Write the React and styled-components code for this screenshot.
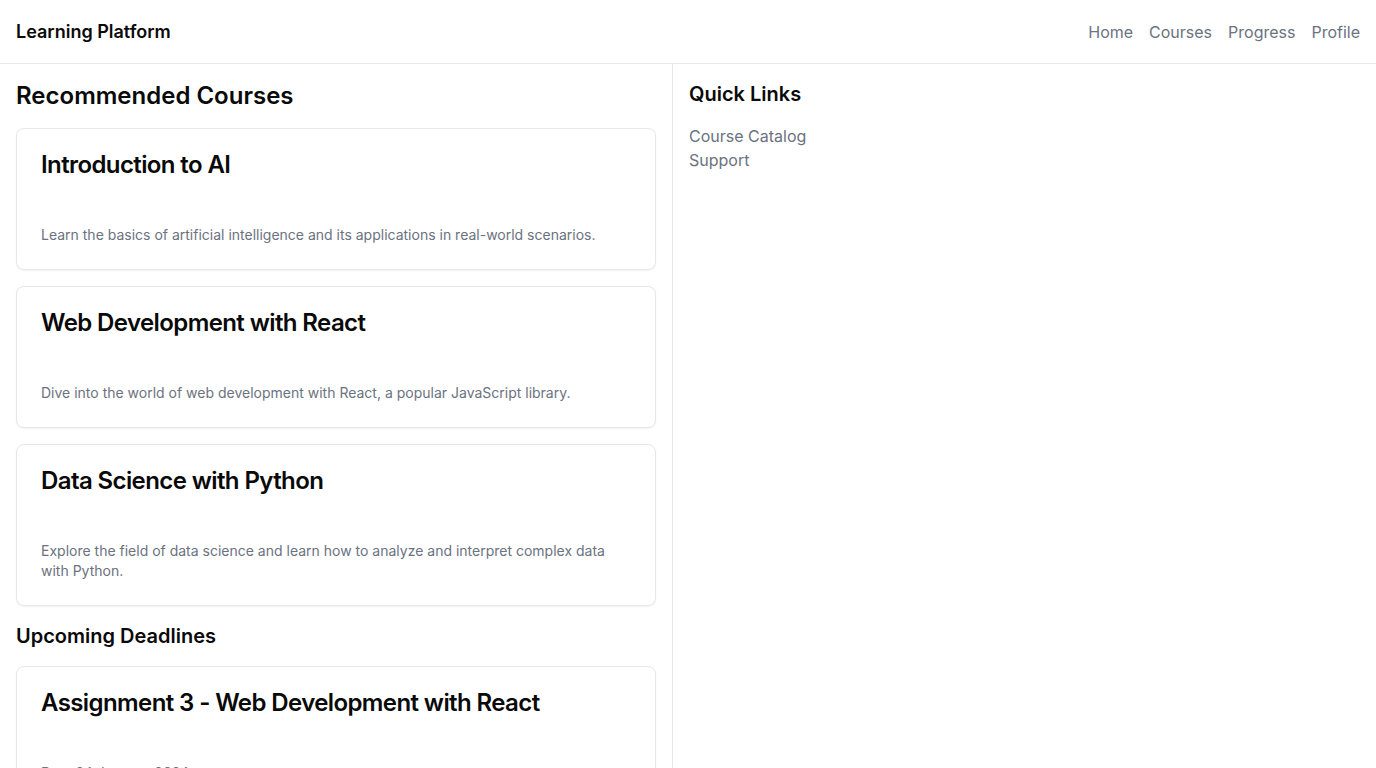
import React from 'react';
import styled, { createGlobalStyle } from 'styled-components';

const GlobalStyle = createGlobalStyle`
  * { box-sizing: border-box; }
  html, body { margin: 0; padding: 0; background: #ffffff; }
  body {
    font-family: Inter, "Noto Sans", sans-serif;
    color: #0a0a0a;
    -webkit-font-smoothing: antialiased;
  }
  h1, h2, h3, p, ul { margin: 0; padding: 0; }
`;

const courses = [
  {
    title: 'Introduction to AI',
    text: 'Learn the basics of artificial intelligence and its applications in real-world scenarios.',
  },
  {
    title: 'Web Development with React',
    text: 'Dive into the world of web development with React, a popular JavaScript library.',
  },
  {
    title: 'Data Science with Python',
    text: 'Explore the field of data science and learn how to analyze and interpret complex data with Python.',
  },
];

const deadlines = [
  { title: 'Assignment 3 - Web Development with React', text: 'Due: 24 January 2024' },
];

function Card({ title, text }) {
  return (
    <CardBox>
      <CardHeader>
        <CardTitle>{title}</CardTitle>
      </CardHeader>
      <CardContent>
        <CardText>{text}</CardText>
      </CardContent>
    </CardBox>
  );
}

function App() {
  return (
    <Page>
      <GlobalStyle />
      <Header>
        <Brand>Learning Platform</Brand>
        <Nav>
          <NavLink href="#">Home</NavLink>
          <NavLink href="#">Courses</NavLink>
          <NavLink href="#">Progress</NavLink>
          <NavLink href="#">Profile</NavLink>
        </Nav>
      </Header>
      <Main>
        <LeftColumn>
          <PageTitle>Recommended Courses</PageTitle>
          {courses.map((c) => (
            <Card key={c.title} title={c.title} text={c.text} />
          ))}
          <SectionTitle>Upcoming Deadlines</SectionTitle>
          {deadlines.map((d) => (
            <Card key={d.title} title={d.title} text={d.text} />
          ))}
        </LeftColumn>
        <RightColumn>
          <SectionTitle>Quick Links</SectionTitle>
          <LinkList>
            <li><QuickLink href="#">Course Catalog</QuickLink></li>
            <li><QuickLink href="#">Support</QuickLink></li>
          </LinkList>
        </RightColumn>
      </Main>
    </Page>
  );
}

const Page = styled.div`
  min-height: 100vh;
  display: flex;
  flex-direction: column;
`;

const Header = styled.header`
  height: 64px;
  padding: 0 16px;
  display: flex;
  align-items: center;
  justify-content: space-between;
  border-bottom: 1px solid #e5e7eb;
`;

const Brand = styled.div`
  font-size: 18px;
  line-height: 28px;
  font-weight: 600;
`;

const Nav = styled.nav`
  display: flex;
  gap: 16px;
`;

const NavLink = styled.a`
  font-size: 16px;
  line-height: 24px;
  color: #6b7280;
  text-decoration: none;
`;

const Main = styled.main`
  flex: 1;
  display: flex;
`;

const LeftColumn = styled.section`
  width: 673px;
  flex-shrink: 0;
  padding: 16px;
  border-right: 1px solid #e5e7eb;
  display: flex;
  flex-direction: column;
  gap: 16px;
`;

const RightColumn = styled.aside`
  flex: 1;
  padding: 16px;
  display: flex;
  flex-direction: column;
  gap: 16px;
`;

const PageTitle = styled.h1`
  font-size: 24px;
  line-height: 32px;
  font-weight: 600;
`;

const SectionTitle = styled.h2`
  font-size: 20px;
  line-height: 28px;
  font-weight: 600;
`;

const CardBox = styled.div`
  border: 1px solid #e5e7eb;
  border-radius: 8px;
  background: #ffffff;
  box-shadow: 0 1px 2px rgba(0, 0, 0, 0.05);
`;

const CardHeader = styled.div`
  padding: 24px 24px 0;
`;

const CardTitle = styled.h3`
  font-size: 24px;
  line-height: 1;
  font-weight: 600;
  letter-spacing: -0.6px;
`;

const CardContent = styled.div`
  padding: 48px 24px 24px;
`;

const CardText = styled.p`
  font-size: 14px;
  line-height: 20px;
  color: #6b7280;
`;

const LinkList = styled.ul`
  list-style: none;
`;

const QuickLink = styled.a`
  font-size: 16px;
  line-height: 24px;
  color: #6b7280;
  text-decoration: none;
`;

export default App;
